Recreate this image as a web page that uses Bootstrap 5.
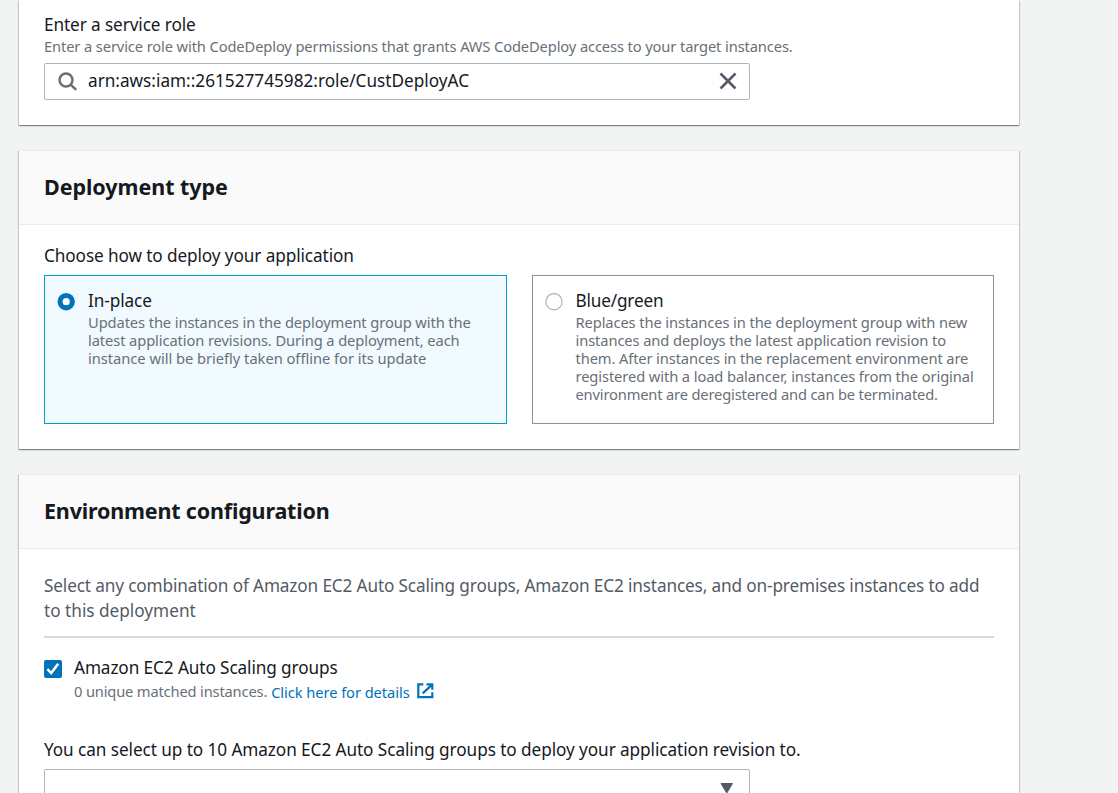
<!DOCTYPE html>
<html lang="en">
<head>
<meta charset="utf-8">
<meta name="viewport" content="width=device-width, initial-scale=1">
<title>Create deployment group</title>
<link href="https://cdn.jsdelivr.net/npm/bootstrap@5.3.0/dist/css/bootstrap.min.css" rel="stylesheet">
<style>
body{background:#f2f3f3;color:#16191f;font:17.2px/25px "Noto Sans","Open Sans",sans-serif;overflow:hidden;height:793px}
.page{width:1000px;margin-left:19px;gap:25px}
.panel{--bs-card-border-width:0;--bs-card-border-radius:0;--bs-card-inner-border-radius:0;--bs-card-color:#16191f;box-shadow:0 1px 1px 0 rgba(0,28,36,.3),1px 1px 1px 0 rgba(0,28,36,.15),-1px 1px 1px 0 rgba(0,28,36,.15)}
.panel-top{border-top:1px solid #eaeded}
.panel-head{height:74px;padding:0 25px 2px;background:#fafafa;border-bottom:1px solid #eaeded}
.panel-head h2{font-size:21.5px;line-height:28px;font-weight:700;letter-spacing:-.05px}
.panel-head h2.long-title{letter-spacing:-.18px}
.panel-body{padding:0 25px 25px}
.first-body{padding-top:12px}
.type-body{padding-top:18px}
.env-body{padding-top:24px}
.desc{font-size:14.7px;line-height:18px;color:#687078;white-space:nowrap}
.label-line{height:25px;white-space:nowrap}
.field{width:706px;height:37px;border:1px solid #aab7b8;border-radius:2px;background:#fff}
.role-field{margin-top:8px}
.role-field span{margin-top:-3px}
.search-icon{margin-left:13px;margin-right:10px}
.clear-icon{margin-right:12px;margin-top:-1px}
.tiles{gap:25px;margin-top:7px}
.tile{height:149px;padding:12px;border:1px solid #879596;flex:1 1 0}
.tile.selected{border-color:#00a1c9;background:#f1faff}
.tile svg{margin-top:5px;margin-right:13px}
.intro{color:#545b64}
.rule{height:2px;margin-top:13px;background:#d5dbdb}
.group-check{margin-top:17px}
.group-check>svg{margin-top:5px;margin-right:12px}
.match-line{margin-top:2px}
.details{color:#0073bb;text-decoration:none;margin-left:4px;padding-top:1px}
.details svg{margin-left:7px}
.select-label{margin-top:36px}
.select-field{margin-top:7px}
.select-field svg{margin-right:15px;margin-top:2px}
.k3{letter-spacing:-.03px}.k5{letter-spacing:-.075px}.k10{letter-spacing:-.1px}.k12{letter-spacing:-.12px}.k13{letter-spacing:-.135px}.k17{letter-spacing:-.17px}
</style>
</head>
<body>
<main class="page d-flex flex-column">
  <section class="card panel">
    <div class="panel-body first-body">
      <div class="label-line k10">Enter a service role</div>
      <div class="desc k12">Enter a service role with CodeDeploy permissions that grants AWS CodeDeploy access to your target instances.</div>
      <div class="field role-field d-flex align-items-center">
        <svg class="search-icon flex-shrink-0" width="20" height="20" viewBox="0 0 20 20" fill="none" stroke="#687078" stroke-width="2.5"><circle cx="8" cy="8" r="6.5"/><path d="M12.6 12.600l5.6 5.300"/></svg>
        <span class="flex-grow-1">arn:aws:iam::261527745982:role/CustDeployAC</span>
        <svg class="clear-icon" width="18" height="18" viewBox="0 0 18 18" fill="none" stroke="#545b64" stroke-width="2.6"><path d="M1.500 1.500l15 15M16.500 1.500l-15 15"/></svg>
      </div>
    </div>
  </section>

  <section class="card panel panel-top">
    <header class="panel-head d-flex align-items-center"><h2 class="mb-0">Deployment type</h2></header>
    <div class="panel-body type-body">
      <div class="label-line k10">Choose how to deploy your application</div>
      <div class="tiles d-flex">
        <label class="tile selected d-flex align-items-start">
          <svg class="flex-shrink-0" width="18" height="18" viewBox="0 0 18 18"><circle cx="9.200" cy="8.700" r="8.700" fill="#0073bb"/><circle cx="9.200" cy="8.700" r="3.600" fill="#fff"/></svg>
          <span>
            <span class="d-block label-line k10">In-place</span>
            <span class="d-block desc k10">Updates the instances in the deployment group with the<br>latest application revisions. During a deployment, each<br><span class="k3">instance will be briefly taken offline for its update</span></span>
          </span>
        </label>
        <label class="tile d-flex align-items-start">
          <svg class="flex-shrink-0" width="18" height="18" viewBox="0 0 18 18"><circle cx="9" cy="8.700" r="8.100" fill="#fff" stroke="#aab7b8" stroke-width="1.250"/></svg>
          <span>
            <span class="d-block label-line k17">Blue/green</span>
            <span class="d-block desc k10">Replaces the instances in the deployment group with new<br>instances and deploys the latest application revision to<br><span class="k12">them. After instances in the replacement environment are</span><br>registered with a load balancer, instances from the original<br><span class="k17">environment are deregistered and can be terminated.</span></span>
          </span>
        </label>
      </div>
    </div>
  </section>

  <section class="card panel panel-top">
    <header class="panel-head d-flex align-items-center"><h2 class="mb-0 long-title">Environment configuration</h2></header>
    <div class="panel-body env-body">
      <p class="intro mb-0 text-nowrap"><span class="k13">Select any combination of Amazon EC2 Auto Scaling groups, Amazon EC2 instances, and on-premises instances to add</span><br>to this deployment</p>
      <div class="rule"></div>
      <label class="group-check d-flex align-items-start">
        <svg class="flex-shrink-0" width="18" height="18" viewBox="0 0 18 18"><rect width="18" height="18" rx="2" fill="#0073bb"/><path d="M3.400 9.200l3.800 3.900 7-9.300" fill="none" stroke="#fff" stroke-width="2.500"/></svg>
        <span>
          <span class="d-block label-line k10">Amazon EC2 Auto Scaling groups</span>
          <span class="match-line d-flex desc">
            <span class="k17">0 unique matched instances.</span>
            <a class="details d-flex k5" href="#">Click here for details
              <svg width="17" height="16" viewBox="0 0 17 16" fill="none" stroke="#0073bb" stroke-width="2.200"><path d="M6.300 1.400H1.300v12.700h14V9.200M9.500 1.400h5.800v5.300M14.800 1.900L5.700 10.400"/></svg>
            </a>
          </span>
        </span>
      </label>
      <div class="label-line select-label k5">You can select up to 10 Amazon EC2 Auto Scaling groups to deploy your application revision to.</div>
      <div class="field select-field d-flex align-items-center justify-content-end">
        <svg width="14" height="11" viewBox="0 0 14 11"><path d="M1 .5h11.500L6.750 10z" fill="#545b64" stroke="#545b64" stroke-linejoin="round"/></svg>
      </div>
    </div>
  </section>
</main>
<script src="https://cdn.jsdelivr.net/npm/bootstrap@5.3.0/dist/js/bootstrap.bundle.min.js"></script>
</body>
</html>
